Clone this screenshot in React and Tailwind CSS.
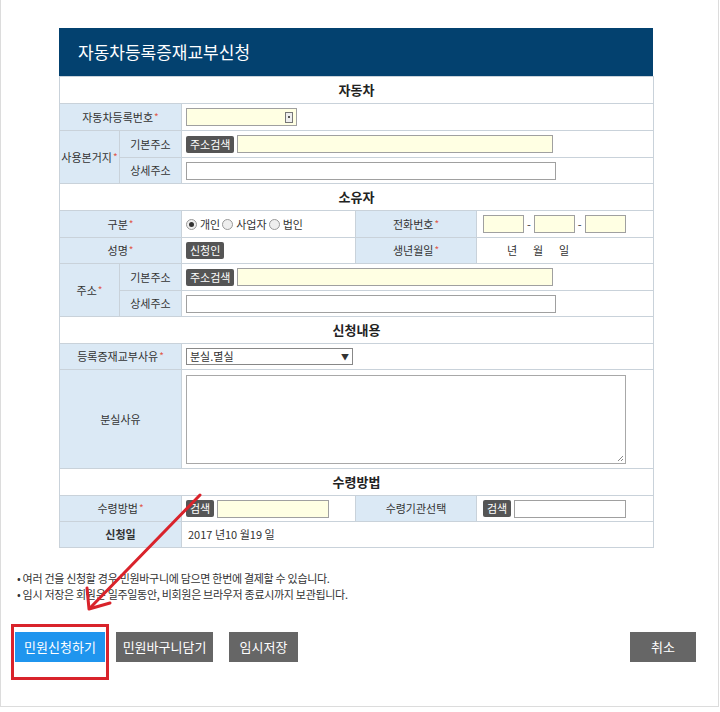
import React from "react";

const font = { fontFamily: "'Noto Sans CJK KR', 'Noto Sans', sans-serif" };

function Star() {
  return <span className="text-[#e05a4a] text-[10px] ml-[1px] align-top">*</span>;
}

function Section({ children }) {
  return (
    <tr className="h-[27px]">
      <td colSpan={5} className="border border-[#c9d2da] bg-white text-center text-[13px] font-bold text-[#222]">
        {children}
      </td>
    </tr>
  );
}

function Th({ children, colSpan, rowSpan, bold }) {
  return (
    <th
      colSpan={colSpan}
      rowSpan={rowSpan}
      className={`border border-[#c9d2da] bg-[#dbe9f5] text-center text-[11px] text-[#333] ${bold ? "font-bold" : "font-normal"}`}
    >
      {children}
    </th>
  );
}

function Td({ children, colSpan }) {
  return (
    <td colSpan={colSpan} className="border border-[#c9d2da] bg-white px-[4px] text-[11px] text-[#333]">
      <div className="flex items-center">{children}</div>
    </td>
  );
}

function Input({ w, yellow }) {
  return (
    <div
      className={`h-[18px] border border-[#a0a0a0] ${yellow ? "bg-[#ffffe3]" : "bg-white"}`}
      style={{ width: w }}
    />
  );
}

function SmallBtn({ children }) {
  return (
    <span className="h-[17px] px-[4px] rounded-[2px] bg-[#555] text-white text-[11px] leading-[17px] mr-[3px] shrink-0">
      {children}
    </span>
  );
}

function Radio({ on, label }) {
  return (
    <span className="flex items-center mr-[2px]">
      <span className="w-[11px] h-[11px] rounded-full border border-[#999] bg-[#eee] flex items-center justify-center mr-[3px]">
        {on && <span className="w-[5px] h-[5px] rounded-full bg-[#333]" />}
      </span>
      {label}
    </span>
  );
}

export default function App() {
  return (
    <div className="relative w-[719px] h-[707px] bg-white border-r border-b border-l border-[#dcdcdc]" style={font}>
      <div className="pt-[28px] pl-[58px]">
        <div className="w-[594px]">
          {/* Title */}
          <div className="h-[48px] bg-[#03416f] text-white text-[17px] pl-[19px] flex items-center">
            자동차등록증재교부신청
          </div>

          <table className="w-[594px] table-fixed border-collapse">
            <colgroup>
              <col className="w-[60px]" />
              <col className="w-[62px]" />
              <col className="w-[174px]" />
              <col className="w-[121px]" />
              <col className="w-[177px]" />
            </colgroup>
            <tbody>
              <Section>자동차</Section>
              <tr className="h-[27px]">
                <Th colSpan={2}>자동차등록번호<Star /></Th>
                <Td colSpan={3}>
                  <div className="h-[18px] w-[111px] border border-[#a0a0a0] bg-[#ffffe3] flex items-center justify-end pr-[3px]">
                    <span className="w-[8px] h-[11px] border border-[#777] bg-[#eee] flex items-center justify-center">
                      <span className="w-[2px] h-[2px] bg-[#555]" />
                    </span>
                  </div>
                </Td>
              </tr>
              <tr className="h-[27px]">
                <Th rowSpan={2}>사용본거지<Star /></Th>
                <Th>기본주소</Th>
                <Td colSpan={3}>
                  <SmallBtn>주소검색</SmallBtn>
                  <Input w={316} yellow />
                </Td>
              </tr>
              <tr className="h-[26px]">
                <Th>상세주소</Th>
                <Td colSpan={3}>
                  <Input w={370} />
                </Td>
              </tr>

              <Section>소유자</Section>
              <tr className="h-[27px]">
                <Th colSpan={2}>구분<Star /></Th>
                <Td>
                  <Radio on label="개인" />
                  <Radio label="사업자" />
                  <Radio label="법인" />
                </Td>
                <Th>전화번호<Star /></Th>
                <Td>
                  <span className="ml-[2px]" />
                  <Input w={41} yellow />
                  <span className="mx-[3px] text-[11px]">-</span>
                  <Input w={41} yellow />
                  <span className="mx-[3px] text-[11px]">-</span>
                  <Input w={41} yellow />
                </Td>
              </tr>
              <tr className="h-[26px]">
                <Th colSpan={2}>성명<Star /></Th>
                <Td>
                  <SmallBtn>신청인</SmallBtn>
                </Td>
                <Th>생년월일<Star /></Th>
                <Td>
                  <span className="ml-[26px] w-[26px]">년</span>
                  <span className="w-[26px]">월</span>
                  <span>일</span>
                </Td>
              </tr>
              <tr className="h-[27px]">
                <Th rowSpan={2}>주소<Star /></Th>
                <Th>기본주소</Th>
                <Td colSpan={3}>
                  <SmallBtn>주소검색</SmallBtn>
                  <Input w={316} yellow />
                </Td>
              </tr>
              <tr className="h-[26px]">
                <Th>상세주소</Th>
                <Td colSpan={3}>
                  <Input w={370} />
                </Td>
              </tr>

              <Section>신청내용</Section>
              <tr className="h-[26px]">
                <Th colSpan={2}>등록증재교부사유<Star /></Th>
                <Td colSpan={3}>
                  <div className="h-[17px] w-[167px] border border-[#888] bg-white flex items-center justify-between px-[3px] text-[11px]">
                    <span>분실.멸실</span>
                    <span className="text-[8px]">▼</span>
                  </div>
                </Td>
              </tr>
              <tr className="h-[99px]">
                <Th colSpan={2}>분실사유</Th>
                <Td colSpan={3}>
                  <div className="relative h-[89px] w-[440px] border border-[#a8a8a8] bg-white">
                    <svg className="absolute right-[1px] bottom-[1px]" width="8" height="8" viewBox="0 0 8 8">
                      <path d="M7 2 L2 7 M7 5 L5 7" stroke="#888" strokeWidth="1" />
                    </svg>
                  </div>
                </Td>
              </tr>

              <Section>수령방법</Section>
              <tr className="h-[26px]">
                <Th colSpan={2}>수령방법<Star /></Th>
                <Td>
                  <SmallBtn>검색</SmallBtn>
                  <Input w={112} yellow />
                </Td>
                <Th>수령기관선택</Th>
                <Td>
                  <span className="ml-[2px]" />
                  <SmallBtn>검색</SmallBtn>
                  <Input w={112} />
                </Td>
              </tr>
              <tr className="h-[26px]">
                <Th colSpan={2} bold>신청일</Th>
                <Td colSpan={3}>
                  <span className="ml-[2px]">2017 년10 월19 일</span>
                </Td>
              </tr>
            </tbody>
          </table>
        </div>
      </div>

      {/* Notes */}
      <div className="mt-[22px] pl-[16px] text-[11px] leading-[16px] tracking-[-0.3px] text-[#333]">
        <p>• 여러 건을 신청할 경우 민원바구니에 담으면 한번에 결제할 수 있습니다.</p>
        <p>• 임시 저장은 회원은 일주일동안, 비회원은 브라우저 종료시까지 보관됩니다.</p>
      </div>

      {/* Buttons */}
      <div className="mt-[30px] flex items-center pl-[14px] pr-[22px]">
        <div className="relative">
          <button className="h-[30px] w-[90px] bg-[#1f95ee] text-white text-[13px]">민원신청하기</button>
          <div className="absolute left-[-4px] top-[-8px] w-[98px] h-[56px] border-[3px] border-[#d9232b]" />
        </div>
        <button className="ml-[11px] h-[30px] w-[97px] bg-[#666] text-white text-[13px]">민원바구니담기</button>
        <button className="ml-[16px] h-[30px] w-[69px] bg-[#666] text-white text-[13px]">임시저장</button>
        <button className="ml-auto h-[30px] w-[66px] bg-[#666] text-white text-[13px]">취소</button>
      </div>

      {/* Red arrow annotation */}
      <svg className="absolute left-0 top-0 pointer-events-none" width="719" height="707">
        <path d="M199 495 L90 607" stroke="#d9232b" strokeWidth="3" strokeLinecap="round" />
        <path d="M88 609 L86 588 M88 609 L109 603" stroke="#d9232b" strokeWidth="3" strokeLinecap="round" />
      </svg>
    </div>
  );
}
